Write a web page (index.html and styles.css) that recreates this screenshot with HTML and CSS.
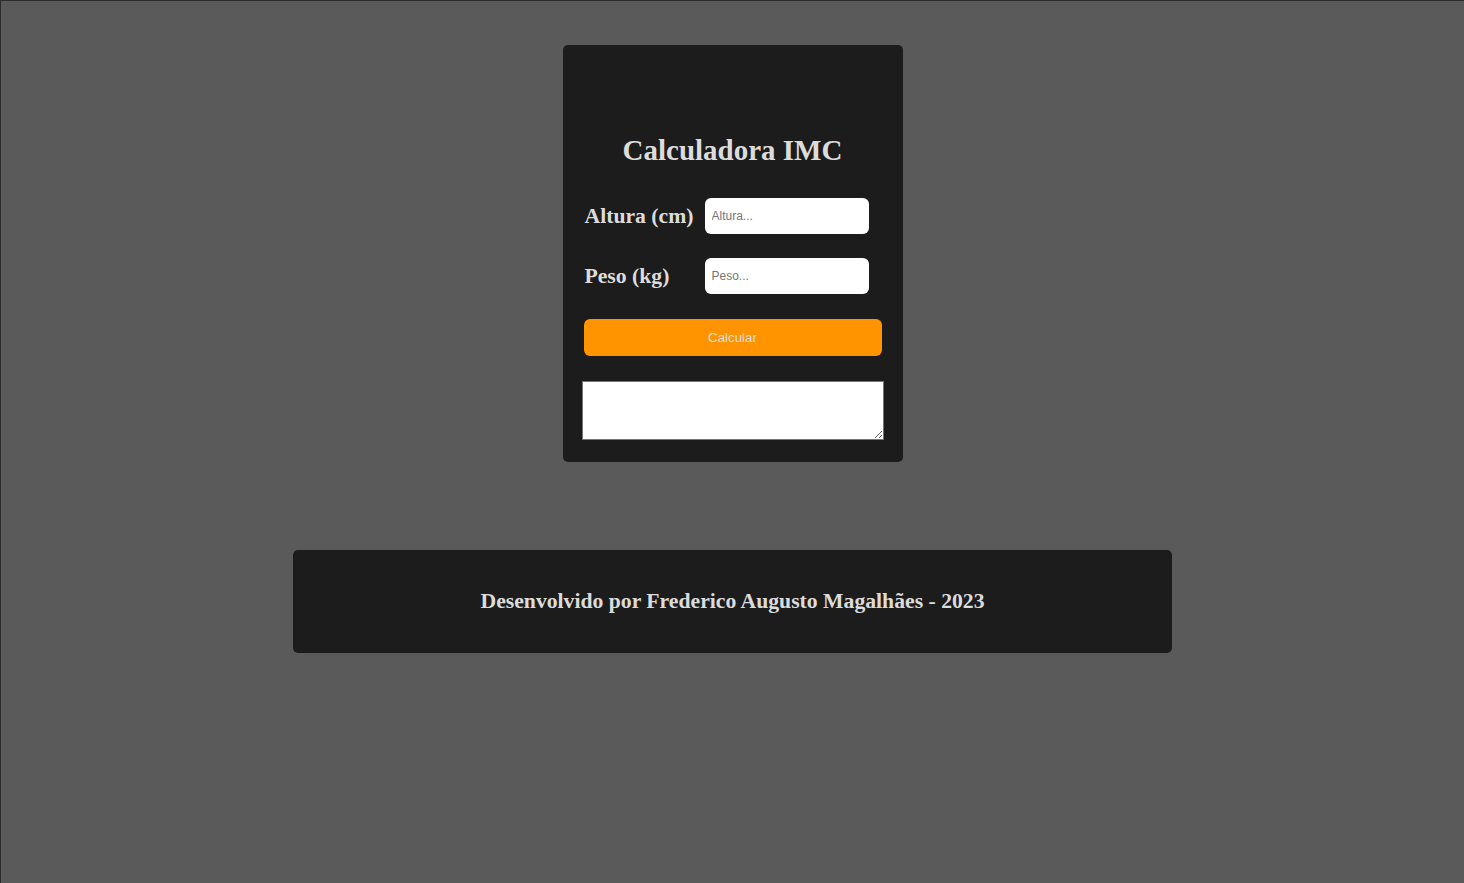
FILE: index.html
```html
<!DOCTYPE html>
<html lang="pt-BR">
<head>
<meta charset="utf-8">
<title>Calculadora IMC</title>
<link rel="stylesheet" href="styles.css">
</head>
<body>
<main class="page">
  <section class="card">
    <h1 class="title">Calculadora IMC</h1>
    <div class="row">
      <label class="label" for="altura">Altura (cm)</label>
      <input class="field" id="altura" type="text" placeholder="Altura...">
    </div>
    <div class="row">
      <label class="label" for="peso">Peso (kg)</label>
      <input class="field" id="peso" type="text" placeholder="Peso...">
    </div>
    <button class="btn" type="button">Calcular</button>
    <textarea class="result"></textarea>
  </section>
  <footer class="footer">
    <p class="footer-text">Desenvolvido por Frederico Augusto Magalhães - 2023</p>
  </footer>
</main>
</body>
</html>
```
FILE: styles.css
```css
html {
  background: #5a5a5a;
}
body {
  margin: 0;
  min-height: 882px;
  border-top: 1px solid #2c2c2c;
  border-left: 1px solid #2c2c2c;
  background: #5a5a5a;
  font-family: "Liberation Serif", "Times New Roman", serif;
  color: #dcdcdc;
}
.page {
  display: flex;
  flex-direction: column;
  align-items: center;
  padding-top: 44px;
}
.card {
  width: 340px;
  box-sizing: border-box;
  background: #1c1c1c;
  border-radius: 5px;
  padding: 88px 21px 22px;
  display: flex;
  flex-direction: column;
}
.title {
  margin: 0;
  height: 34px;
  line-height: 34px;
  font-size: 29px;
  font-weight: bold;
  text-align: center;
}
.row {
  display: flex;
  align-items: center;
  height: 36px;
  margin-top: 24px;
}
.row:first-of-type {
  margin-top: 31px;
}
.label {
  width: 121px;
  font-size: 21.7px;
  font-weight: bold;
  padding-left: 1px;
  box-sizing: border-box;
}
.field {
  width: 164px;
  height: 36px;
  box-sizing: border-box;
  border: none;
  border-radius: 6px;
  background: #fff;
  padding: 0 7px;
  font-family: "Liberation Sans", Arial, sans-serif;
  font-size: 12px;
  color: #333;
  outline: none;
}
.field::placeholder {
  color: #757575;
}
.btn {
  margin-top: 25px;
  height: 37px;
  width: 298px;
  border: none;
  border-radius: 6px;
  background: #ff9400;
  color: #dcdcdc;
  font-family: "Liberation Sans", Arial, sans-serif;
  font-size: 13.33px;
  cursor: pointer;
}
.result {
  display: block;
  margin: 25px 0 0 -2px;
  width: 302px;
  height: 59px;
  box-sizing: border-box;
  border: 1px solid #767676;
  border-radius: 0;
  background: #fff;
  resize: both;
}
.footer {
  margin-top: 88px;
  width: 879px;
  height: 103px;
  background: #1c1c1c;
  border-radius: 5px;
  display: flex;
  align-items: center;
  justify-content: center;
}
.footer-text {
  margin: 0;
  font-size: 21.7px;
  font-weight: bold;
}
```
